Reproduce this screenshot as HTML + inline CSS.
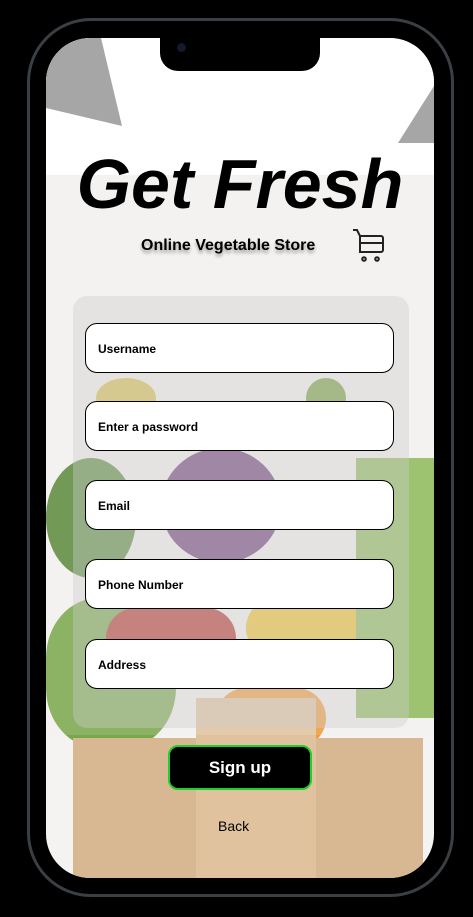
<!DOCTYPE html>
<html><head><meta charset="utf-8"><style>
*{margin:0;padding:0;box-sizing:border-box}
body{width:473px;height:917px;background:#000;position:relative;overflow:hidden;font-family:"Liberation Sans",sans-serif}
.frame{position:absolute;left:27px;top:18px;width:427px;height:879px;border-radius:64px;border:3px solid #3a3f44;background:#000}
.screen{position:absolute;left:46px;top:38px;width:388px;height:840px;border-radius:44px;overflow:hidden;background:#f4f3f1}
.notch{position:absolute;left:160px;top:38px;width:160px;height:33px;background:#000;border-radius:0 0 18px 18px}
.abs{position:absolute}
.field{position:absolute;left:39px;width:309px;height:50px;background:#fff;border:1px solid #000;border-radius:12px;font-weight:bold;font-size:12px;padding:18px 0 0 12px}
</style></head><body>
<div class="frame"></div>
<div class="screen">
 <div class="abs" style="left:0;top:0;width:388px;height:137px;background:#fff"></div>
 <svg class="abs" style="left:0;top:0" width="388" height="140"><polygon points="0,0 55,0 76,88 0,70" fill="#a6a6a6"/><polygon points="388,48 388,105 352,105" fill="#a6a6a6"/></svg>
 <div class="abs" style="left:0;top:420px;width:90px;height:120px;background:#5c8a3a;border-radius:50%"></div>
 <div class="abs" style="left:115px;top:410px;width:120px;height:115px;background:#6e3f7a;border-radius:50%"></div>
 <div class="abs" style="left:0;top:560px;width:130px;height:150px;background:#79a84a;border-radius:40%"></div>
 <div class="abs" style="left:60px;top:570px;width:130px;height:60px;background:#b8352e;border-radius:30px"></div>
 <div class="abs" style="left:200px;top:560px;width:140px;height:60px;background:#f0c430;border-radius:30px"></div>
 <div class="abs" style="left:310px;top:420px;width:78px;height:260px;background:#8fba5a"></div>
 <div class="abs" style="left:50px;top:340px;width:60px;height:40px;background:#d8c050;border-radius:50%"></div>
 <div class="abs" style="left:260px;top:340px;width:40px;height:40px;background:#7aa040;border-radius:50%"></div>
 <div class="abs" style="left:170px;top:650px;width:110px;height:60px;background:#f09a3a;border-radius:30px"></div>
 <div class="abs" style="left:27px;top:700px;width:350px;height:140px;background:#d7b892"></div>
 <div class="abs" style="left:150px;top:660px;width:120px;height:180px;background:#e0c39e"></div>
 <div class="abs" style="left:0;top:137px;width:388px;height:560px;background:rgba(244,243,241,.15)"></div>
 <div class="abs" style="left:27px;top:258px;width:336px;height:432px;background:rgba(205,205,205,.4);border-radius:14px"></div>
 <div class="abs" style="left:-10px;top:106px;width:408px;text-align:center;font-size:70px;font-weight:bold;font-style:italic;letter-spacing:0px">Get Fresh</div>
 <div class="abs" style="left:95px;top:199px;font-size:16px;font-weight:bold;text-shadow:0 3px 3px rgba(0,0,0,.35)">Online Vegetable Store</div>
 <svg class="abs" style="left:306px;top:190px" width="36" height="36" viewBox="0 0 36 36" fill="none" stroke="#222" stroke-width="2"><path d="M1 2h4l3 6v16h21a2 2 0 0 0 2-2V10a2 2 0 0 0-2-2H8M8 15h23"/><circle cx="12" cy="31" r="1.8"/><circle cx="25" cy="31" r="1.8"/></svg>
 <div class="field" style="top:285px">Username</div>
 <div class="field" style="top:363px">Enter a password</div>
 <div class="field" style="top:442px">Email</div>
 <div class="field" style="top:521px">Phone Number</div>
 <div class="field" style="top:601px">Address</div>
 <div class="abs" style="left:122px;top:707px;width:144px;height:45px;background:#000;border:2px solid #1ed02a;border-radius:10px;color:#fff;font-size:17px;font-weight:bold;text-align:center;line-height:41px">Sign up</div>
 <div class="abs" style="left:172px;top:780px;font-size:14px">Back</div>
</div>
<div class="notch"></div>
<div class="abs" style="left:177px;top:43px;width:9px;height:9px;border-radius:50%;background:#141a2a"></div>
</body></html>
